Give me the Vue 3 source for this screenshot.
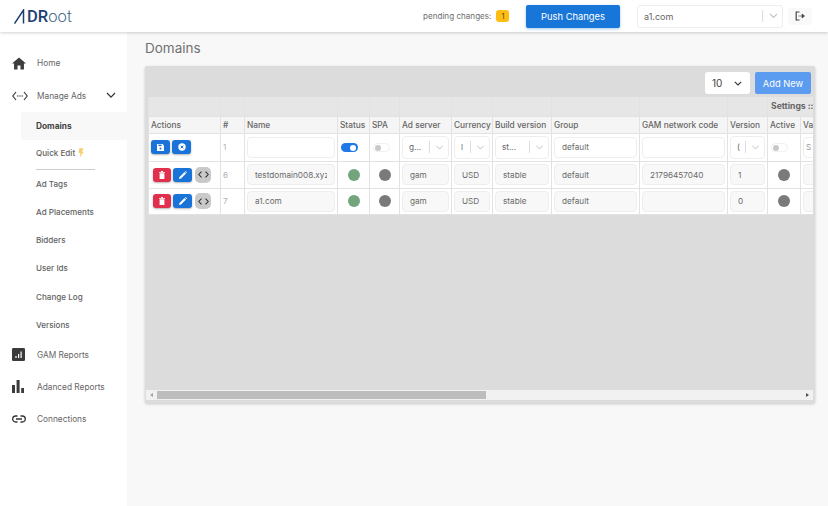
<script setup>
const topA = [
  { label: 'Home', icon: 'home' },
  { label: 'Manage Ads', icon: 'code', chev: true },
]
const subs = ['Ad Tags', 'Ad Placements', 'Bidders', 'User Ids', 'Change Log', 'Versions']
const topB = [
  { label: 'GAM Reports', icon: 'gam' },
  { label: 'Adanced Reports', icon: 'bars' },
  { label: 'Connections', icon: 'link' },
]
const cols = [72, 24, 93, 32, 30, 52, 41, 59, 88, 88, 40, 33, 40]
const heads = ['Actions', '#', 'Name', 'Status', 'SPA', 'Ad server', 'Currency', 'Build version', 'Group', 'GAM network code', 'Version', 'Active', 'Value']
const rows = [
  { id: 6, name: 'testdomain008.xyz', code: '21796457040', version: '1' },
  { id: 7, name: 'a1.com', code: '', version: '0' },
]
</script>

<template>
  <div class="page">
    <header class="topbar">
      <div class="logo">
        <svg class="logo-mark" width="13" height="15" viewBox="0 0 13 15">
          <path d="M0.500 14.500 L9.500 1 L9.500 14.500" fill="none" stroke="#1d3f74" stroke-width="1.500" />
        </svg>
        <span class="logo-d">DR</span><span class="logo-r">oot</span>
      </div>
      <div class="pending">
        <span>pending changes:</span>
        <span class="badge">1</span>
      </div>
      <button class="push">Push Changes</button>
      <div class="site">
        <span class="site-val">a1.com</span>
        <span class="site-sep"></span>
        <svg width="9" height="6" viewBox="0 0 9 6"><path d="M1 1l3.500 3.500L8 1" fill="none" stroke="#c4c4c4" stroke-width="1.100" /></svg>
      </div>
      <button class="logout">
        <svg width="10" height="10" viewBox="0 0 10 10">
          <path d="M4.500 1H1.200v8h3.300" fill="none" stroke="#444" stroke-width="1.200" />
          <path d="M3.500 5h3.500V3l2.600 2-2.600 2V5" fill="#444" stroke="#444" stroke-width=".6" />
        </svg>
      </button>
    </header>

    <div class="body">
      <aside class="sidebar">
        <nav class="nav">
          <div v-for="item in topA" :key="item.label" class="top-item">
            <span class="ico">
              <svg v-if="item.icon === 'home'" width="14" height="13" viewBox="0 0 15 13"><path d="M7.500 0L0 6.600h2.200V13h3.700V8.600h3.200V13h3.700V6.600H15z" fill="#3d3d3d" /></svg>
              <svg v-else width="16" height="10" viewBox="0 0 16 10">
                <path d="M4 1L.8 5 4 9M12 1l3.200 4L12 9" fill="none" stroke="#333" stroke-width="1.100" />
                <circle cx="5.800" cy="5" r=".7" fill="#333" /><circle cx="8" cy="5" r=".7" fill="#333" /><circle cx="10.200" cy="5" r=".7" fill="#333" />
              </svg>
            </span>
            <span class="top-label">{{ item.label }}</span>
            <svg v-if="item.chev" class="chev" width="10" height="7" viewBox="0 0 10 7"><path d="M1 1l4 4.200L9 1" fill="none" stroke="#333" stroke-width="1.200" /></svg>
          </div>
          <div class="sub sub-active">Domains</div>
          <div class="sub sub-quick">Quick Edit
            <svg width="6" height="10" viewBox="0 0 7 11"><path d="M1.500 0h5L4.600 4H6.600L2 11l1-5.400H.6z" fill="#f7cf70" /></svg>
          </div>
          <div class="divider"></div>
          <div v-for="s in subs" :key="s" class="sub">{{ s }}</div>
          <div v-for="item in topB" :key="item.label" class="top-item top-b">
            <span class="ico">
              <svg v-if="item.icon === 'gam'" width="13" height="13" viewBox="0 0 13 13">
                <rect width="13" height="13" rx="1.300" fill="#3b3b3b" />
                <path d="M3.400 8h1.200v2H3.400zM6 6h1.200v4H6zM8.500 3.500h1.200V10H8.500z" fill="#fff" />
              </svg>
              <svg v-else-if="item.icon === 'bars'" width="12" height="13" viewBox="0 0 12 13">
                <path d="M0 5h3v8H0zM4.600 0h3v13h-3zM9.200 8H12v5H9.200z" fill="#3b3b3b" />
              </svg>
              <svg v-else width="14" height="8" viewBox="0 0 14 8">
                <path d="M5.500 1H3.700a3 3 0 0 0 0 6h1.800M8.500 1h1.800a3 3 0 0 1 0 6H8.500M4 4h6" fill="none" stroke="#333" stroke-width="1.300" />
              </svg>
            </span>
            <span class="top-label">{{ item.label }}</span>
          </div>
        </nav>
      </aside>

      <main class="main">
        <h1 class="title">Domains</h1>
        <section class="card">
          <div class="toolbar">
            <div class="size">
              <span>10</span>
              <svg width="8" height="5" viewBox="0 0 8 5"><path d="M.8.8L4 4 7.200.8" fill="none" stroke="#333" stroke-width="1.100" /></svg>
            </div>
            <button class="add">Add New</button>
          </div>
          <div class="table-wrap">
            <table class="grid">
              <colgroup><col v-for="(w, i) in cols" :key="i" :style="{ width: w + 'px' }" /></colgroup>
              <thead>
                <tr class="group-row">
                  <th v-for="i in 11" :key="i"></th>
                  <th colspan="2" class="settings">Settings ::</th>
                </tr>
                <tr class="head-row">
                  <th v-for="h in heads" :key="h">{{ h }}</th>
                </tr>
              </thead>
              <tbody>
                <tr class="row-new">
                  <td class="first">
                    <div class="acts acts-new">
                      <span class="act blue">
                        <svg width="7" height="7" viewBox="0 0 7 7"><path d="M0 0h5.500L7 1.500V7H0z" fill="#fff" /><rect x="1.500" y=".6" width="3" height="1.500" fill="#1a73d9" /><circle cx="3.500" cy="4.500" r="1" fill="#1a73d9" /></svg>
                      </span>
                      <span class="act blue">
                        <svg width="8" height="8" viewBox="0 0 8 8"><circle cx="4" cy="4" r="3.700" fill="#fff" /><path d="M2.700 2.700l2.600 2.600M5.300 2.700L2.700 5.300" stroke="#1a73d9" stroke-width="1" /></svg>
                      </span>
                    </div>
                  </td>
                  <td class="num">1</td>
                  <td><div class="field"></div></td>
                  <td class="lead"><span class="toggle on"><i></i></span></td>
                  <td class="lead"><span class="toggle off"><i></i></span></td>
                  <td><div class="pick"><span class="pick-val">g...</span><span class="pick-sep"></span><svg width="7" height="5" viewBox="0 0 7 5"><path d="M.5.8L3.500 4 6.500.8" fill="none" stroke="#bbb" stroke-width=".9" /></svg></div></td>
                  <td><div class="pick"><span class="pick-val">l</span><span class="pick-sep"></span><svg width="7" height="5" viewBox="0 0 7 5"><path d="M.5.8L3.500 4 6.500.8" fill="none" stroke="#bbb" stroke-width=".9" /></svg></div></td>
                  <td><div class="pick"><span class="pick-val">st...</span><span class="pick-sep"></span><svg width="7" height="5" viewBox="0 0 7 5"><path d="M.5.8L3.500 4 6.500.8" fill="none" stroke="#bbb" stroke-width=".9" /></svg></div></td>
                  <td><div class="field"><span class="txt">default</span></div></td>
                  <td><div class="field"></div></td>
                  <td><div class="pick"><span class="pick-val">(</span><span class="pick-sep"></span><svg width="7" height="5" viewBox="0 0 7 5"><path d="M.5.8L3.500 4 6.500.8" fill="none" stroke="#bbb" stroke-width=".9" /></svg></div></td>
                  <td class="lead"><span class="toggle off"><i></i></span></td>
                  <td><div class="field clip"><span class="txt">S</span></div></td>
                </tr>
                <tr v-for="r in rows" :key="r.id" class="row-data" :class="{ 'row-last': r.id === 7 }">
                  <td class="first">
                    <div class="acts">
                      <span class="act red">
                        <svg width="6" height="8" viewBox="0 0 6 8"><path d="M0 1h6v.8H0zM2 0h2v1H2zM.6 2.200h4.800V8H.6z" fill="#fff" /></svg>
                      </span>
                      <span class="act blue">
                        <svg width="8" height="8" viewBox="0 0 8 8"><path d="M0 8l.5-2L5.500 1 7 2.500l-5 5zM6 .5l.7-.5L8 1.300l-.5.7z" fill="#fff" /></svg>
                      </span>
                      <span class="act grey">
                        <svg width="11" height="7" viewBox="0 0 11 7"><path d="M3.500.6L.8 3.500l2.700 2.900M7.500.6l2.700 2.900-2.700 2.900" fill="none" stroke="#333" stroke-width="1.100" /></svg>
                      </span>
                    </div>
                  </td>
                  <td class="num">{{ r.id }}</td>
                  <td><div class="field ro name"><span class="txt">{{ r.name }}</span></div></td>
                  <td class="center"><span class="dot green"></span></td>
                  <td class="center"><span class="dot"></span></td>
                  <td><div class="field ro"><span class="txt">gam</span></div></td>
                  <td><div class="field ro"><span class="txt">USD</span></div></td>
                  <td><div class="field ro"><span class="txt">stable</span></div></td>
                  <td><div class="field ro"><span class="txt">default</span></div></td>
                  <td><div class="field ro"><span class="txt">{{ r.code }}</span></div></td>
                  <td><div class="field ro"><span class="txt">{{ r.version }}</span></div></td>
                  <td class="center"><span class="dot"></span></td>
                  <td><div class="field ro"></div></td>
                </tr>
              </tbody>
            </table>
          </div>
          <div class="hscroll">
            <span class="arrow left"></span>
            <div class="track"><div class="thumb"></div></div>
            <span class="arrow right"></span>
          </div>
        </section>
      </main>
    </div>
  </div>
</template>

<style>
html, body { margin: 0; background: #f8f8f8; }
</style>

<style scoped>
* { box-sizing: border-box; }
.page { width: 828px; height: 506px; overflow: hidden; display: flex; flex-direction: column; font-family: Inter, "Liberation Sans", sans-serif; color: #555; background: #f8f8f8; }

.topbar { height: 32px; flex: none; background: #fff; box-shadow: 0 1px 3px rgba(0,0,0,.18); display: flex; align-items: center; position: relative; z-index: 2; padding: 0 16px 0 14px; }
.logo { display: flex; align-items: center; font-family: Roboto, sans-serif; font-size: 16.500px; height: 32px; }
.logo-mark { margin-right: 0; }
.logo-d { color: #1d3f74; font-weight: 500; }
.logo-r { color: #3d6484; font-weight: 300; }
.pending { display: flex; align-items: center; gap: 5px; font-size: 8.100px; color: #6e6e6e; width: 103px; margin-left: auto; }
.badge { width: 13px; height: 12px; border-radius: 3px; background: #fdbd12; color: #5a4300; font-size: 7.500px; display: flex; align-items: center; justify-content: center; flex: none; }
.push { width: 94px; height: 23px; background: #1976d9; color: #fff; border: 0; border-radius: 2px; font: 400 9.400px Inter, sans-serif; box-shadow: 0 1px 3px rgba(25,118,217,.4); padding: 0; }
.site { width: 146px; height: 23px; margin-left: 17px; border: 1px solid #eee; border-radius: 3px; display: flex; align-items: center; padding: 0 4px 0 6px; background: #fff; }
.site-val { flex: 1; font-size: 9px; color: #666; }
.site-sep { width: 1px; height: 12px; background: #ddd; margin-right: 6px; }
.logout { width: 24px; height: 17px; margin-left: 5px; background: #f9f9f9; border: 0; border-radius: 3px; display: flex; align-items: center; justify-content: center; padding: 0; }

.body { flex: 1; display: flex; min-height: 0; }
.sidebar { width: 127px; flex: none; background: #fff; }
.nav { display: flex; flex-direction: column; padding-top: 15px; }
.top-item { height: 32.500px; display: flex; align-items: center; font-size: 8.300px; color: #666; padding-right: 11px; }
.ico { width: 37px; padding-left: 12px; display: flex; align-items: center; flex: none; }
.top-label { white-space: nowrap; }
.chev { margin-left: auto; }
.sub { height: 28.200px; margin-left: 21px; padding-left: 15px; display: flex; align-items: center; gap: 3px; font-size: 8.100px; color: #626262; font-weight: 500; }
.sub-active { background: #f8f8f8; color: #444; font-weight: 700; font-size: 8.300px; border-radius: 2px 0 0 2px; }
.sub-quick { height: 26.500px; margin-bottom: 2px; }
.divider { height: 1px; width: 59px; background: #ccc; margin-left: 36px; }
.top-b { height: 32px; }

.main { flex: 1; min-width: 0; padding: 7px 13px 0 18px; }
.title { margin: 0; font-size: 13.500px; font-weight: 400; color: #707070; line-height: 18px; height: 27px; }
.card { height: 337px; background: #dcdcdc; border-radius: 2px; box-shadow: 0 1px 3px rgba(0,0,0,.2); display: flex; flex-direction: column; padding: 6px 2px 3px 1px; }
.toolbar { display: flex; justify-content: flex-end; align-items: center; gap: 5px; padding-right: 2px; height: 22px; margin-bottom: 3px; flex: none; }
.size { width: 45px; height: 22px; background: #fff; border-radius: 3px; display: flex; align-items: center; justify-content: space-between; padding: 0 8px 0 7px; font-size: 10px; color: #444; }
.add { width: 56px; height: 22px; border: 0; border-radius: 2px; background: #5b9bf0; color: #fff; font: 400 9.300px Inter, sans-serif; padding: 0; }

.table-wrap { flex: 1; min-height: 0; overflow: hidden; padding-left: 2px; }
.grid { border-collapse: collapse; table-layout: fixed; width: 692px; font-size: 8.200px; }
.grid th, .grid td { padding: 0; border: 1px solid #e2e2e2; overflow: hidden; white-space: nowrap; }
.group-row th { height: 19px; background: #e6e6e6; font-weight: 700; font-size: 8.600px; color: #666; text-align: left; padding-left: 3px; border-top: 0; }
.head-row th { height: 17px; background: #f5f5f5; font-weight: 500; font-size: 8.300px; color: #666; text-align: left; padding-left: 2px; }
.row-new td, .row-data td { background: #fff; padding: 0 2px; }
.row-new td { height: 28px; }
.row-data td { height: 27px; }
.row-last td { height: 26px; }
.num { color: #b0b0b0; }
.grid .first { padding-left: 2px; }
.center { text-align: center; }
.grid .lead { padding-left: 3px; }
.acts { display: flex; gap: 2px; padding-left: 2px; align-items: center; }
.acts-new { padding-left: 0; gap: 2px; }
.act { width: 18px; height: 14px; border-radius: 3px; display: flex; align-items: center; justify-content: center; box-shadow: 0 1px 2px rgba(0,0,0,.3); flex: none; }
.act.blue { width: 19px; background: #1a73d9; }
.red { background: #e0304e; }
.act.grey { background: #c9c9c9; border-radius: 5px; width: 16px; height: 16px; box-shadow: none; margin-left: 1px; }
.field { height: 21px; border: 1px solid #eee; border-radius: 4px; background: #fff; font-size: 8.200px; color: #6a6a6a; padding: 0 7px; display: flex; align-items: center; overflow: hidden; white-space: nowrap; }
.field.ro { background: #f8f8f8; }
.txt { flex: 1; min-width: 0; overflow: hidden; }
.clip { padding-left: 2px; color: #999; }
.pick { height: 23px; border: 1px solid #eee; border-radius: 4px; display: flex; align-items: center; padding: 0 5px 0 6px; font-size: 8.200px; color: #666; background: #fff; }
.pick-val { flex: 1; min-width: 0; overflow: hidden; }
.pick-sep { width: 1px; height: 12px; background: #ddd; margin-right: 6px; flex: none; }
.toggle { display: inline-block; width: 17px; height: 9px; border-radius: 5px; position: relative; vertical-align: middle; }
.toggle i { position: absolute; width: 6px; height: 6px; border-radius: 50%; }
.toggle.on { background: #1f78e6; }
.toggle.on i { right: 2px; top: 1.500px; background: #fff; }
.toggle.off { background: #fff; border: 1px solid #f0f0f0; }
.toggle.off i { left: 1px; top: .5px; background: #c8c8c8; }
.dot { display: inline-block; width: 12px; height: 12px; border-radius: 50%; background: #7a7a7a; vertical-align: middle; }
.dot.green { background: #72a57c; }

.hscroll { height: 10px; display: flex; align-items: center; background: #f1f1f1; flex: none; }
.arrow { width: 11px; height: 10px; flex: none; position: relative; }
.arrow::after { content: ""; position: absolute; top: 2.500px; border-top: 2.500px solid transparent; border-bottom: 2.500px solid transparent; }
.arrow.left::after { left: 4px; border-right: 3px solid #a3a3a3; }
.arrow.right::after { left: 4px; border-left: 3px solid #505050; }
.track { flex: 1; height: 10px; display: flex; align-items: center; }
.thumb { width: 329px; height: 8px; background: #bdbdbd; }
</style>
